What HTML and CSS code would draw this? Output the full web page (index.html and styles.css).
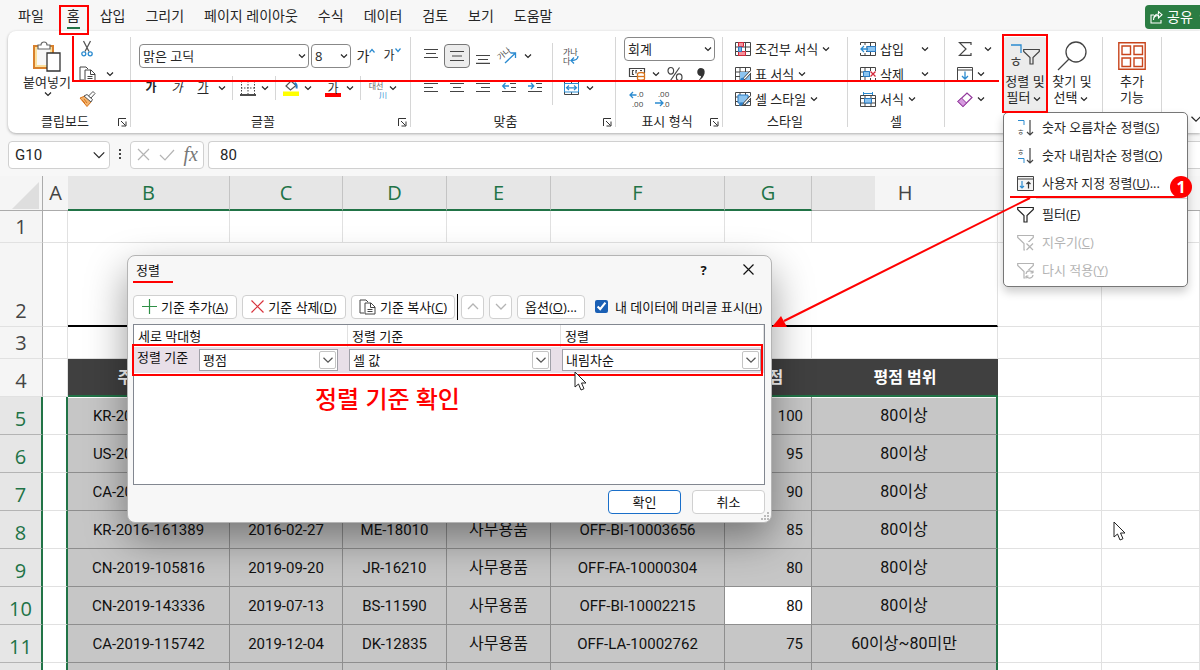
FILE: index.html
```html
<!DOCTYPE html>
<html lang="ko">
<head>
  <meta charset="UTF-8">
  <meta name="viewport" content="width=device-width, initial-scale=1.0">
  <title>사용자 지정 정렬</title>
  <link rel="stylesheet" href="styles.css">
</head>
<body>
  <!-- 공통 아이콘 -->
  <svg class="defs" width="0" height="0" aria-hidden="true">
    <symbol id="chev" viewBox="0 0 8 8"><path d="M1 2.500 4 5.500 7 2.500" fill="none" stroke="currentColor" stroke-width="1.200" vector-effect="non-scaling-stroke"/></symbol>
    <symbol id="launch" viewBox="0 0 9 9"><path d="M.5 8V.5H8M3 3l4.500 4.500M8 3.500V8H3.500" fill="none" stroke="#333"/></symbol>
    <symbol id="copy" viewBox="0 0 17 16"><path d="M5 14H1V1h6l2 2M6 15V4h6l4 4v7zM11.500 4v4.500H16M8.500 10.500h5M8.500 12.500h5" fill="none" stroke="#444"/></symbol>
    <symbol id="funnel" viewBox="0 0 17 17"><path d="M.7 1.500h15.600v2L10 9.500V16H7V9.500L.7 3.500z" fill="none" stroke="currentColor" stroke-width="1.200"/></symbol>
    <symbol id="table" viewBox="0 0 16 14"><path d="M.5.5h15v13H.5zM.5 5h15M.5 9.500h15M5 .5v13M10.500 .5v13" fill="none" stroke="#444"/></symbol>
    <symbol id="cursor" viewBox="0 0 13 20"><path d="M1 1v15l3.500-3 2.500 6 3-1.300-2.500-5.700H12z" fill="#fff" stroke="#222"/></symbol>
  </svg>

  <header class="tabs">
    <nav class="tab-list">
      <a href="#">파일</a>
      <a href="#" class="active">홈</a>
      <a href="#">삽입</a>
      <a href="#">그리기</a>
      <a href="#">페이지 레이아웃</a>
      <a href="#">수식</a>
      <a href="#">데이터</a>
      <a href="#">검토</a>
      <a href="#">보기</a>
      <a href="#">도움말</a>
    </nav>
    <button class="share">
      <svg width="13" height="13" viewBox="0 0 13 13"><path d="M4 4H1v8h10V9M3.500 9c0-3 2-4.500 5-4.500V7L12 3.700 8.500.7V3C5 3 3.500 5.500 3.500 9z" fill="none" stroke="#fff" stroke-width="1.100"/></svg>
      공유
      <svg class="chev"><use href="#chev"/></svg>
    </button>
  </header>

  <section class="ribbon">
    <!-- 클립보드 -->
    <div class="group group-clip">
      <div class="group-body">
        <button class="big">
          <svg width="28" height="31" viewBox="0 0 28 31"><path d="M1 5h19v22H1z" fill="#fbdf9c" stroke="#d8802c" stroke-width="2"/><path d="M4 8h13v16H4z" fill="#f7f7f7"/><path d="M5 8V4h3c0-4 6-4 6 0h3v4z" fill="#fff" stroke="#666" stroke-width="1.200"/><path d="M14 12h13v18H14z" fill="#fff" stroke="#333" stroke-width="1.300"/></svg>
          <span>붙여넣기</span>
          <svg class="chev"><use href="#chev"/></svg>
        </button>
        <div class="stack">
          <div class="row"><button class="tool" aria-label="잘라내기"><svg width="12" height="16" viewBox="0 0 12 16"><path d="M2.500 0 8 10.500M9.500 0 4 10.500" stroke="#555" stroke-width="1.300"/><circle cx="2.800" cy="12.800" r="2" fill="none" stroke="#2b8bd0" stroke-width="1.300"/><circle cx="9.200" cy="12.800" r="2" fill="none" stroke="#2b8bd0" stroke-width="1.300"/></svg></button></div>
          <div class="row copy-row"><button class="tool" aria-label="복사"><svg width="17" height="16"><use href="#copy"/></svg></button><svg class="chev"><use href="#chev"/></svg></div>
          <div class="row"><button class="tool" aria-label="서식 복사"><svg width="17" height="16" viewBox="0 0 17 16"><path d="m1 7 5-2 6 6-4 4.500z" fill="#f3b26b" stroke="#d8741c"/><path d="m5 5 3-1.500 5.500 5L12 11z" fill="#fff" stroke="#555"/><path d="m9.500 5 4.500-4.500 2 2L12 7z" fill="#fff" stroke="#555"/><path d="m3 9 3 3M5 8l3 4" stroke="#d8741c"/></svg></button></div>
        </div>
      </div>
      <div class="group-label">클립보드<svg class="launch"><use href="#launch"/></svg></div>
    </div>

    <!-- 글꼴 -->
    <div class="group group-font">
      <div class="lines">
        <div class="row">
          <span class="select font-name"><select aria-label="글꼴"><option>맑은 고딕</option></select><svg class="chev"><use href="#chev"/></svg></span>
          <span class="select font-size"><select aria-label="글꼴 크기"><option>8</option></select><svg class="chev"><use href="#chev"/></svg></span>
          <button class="tool glyph large" aria-label="글꼴 크게">가<svg width="6" height="4" viewBox="0 0 6 4"><path d="m.5 3.500 2.500-3 2.500 3" fill="none" stroke="#2b8bd0" stroke-width="1.200"/></svg></button>
          <button class="tool glyph" aria-label="글꼴 작게">가<svg width="6" height="4" viewBox="0 0 6 4"><path d="m.5.5 2.500 3 2.500-3" fill="none" stroke="#2b8bd0" stroke-width="1.200"/></svg></button>
        </div>
        <div class="row">
          <button class="tool glyph"><b>가</b></button>
          <button class="tool glyph"><i>가</i></button>
          <button class="tool glyph"><u>가</u></button>
          <svg class="chev"><use href="#chev"/></svg>
          <span class="sep"></span>
          <button class="tool narrow" aria-label="테두리"><svg width="16" height="16" viewBox="0 0 16 16"><path d="M1 1.500h14M1 8h14M1.500 1v13M8 1v13M14.500 1v13" stroke="#444" stroke-dasharray="1.500 1.500"/><path d="M0 15h16" stroke="#111" stroke-width="1.500"/></svg></button>
          <svg class="chev"><use href="#chev"/></svg>
          <span class="sep"></span>
          <button class="tool narrow" aria-label="채우기 색"><svg width="16" height="16" viewBox="0 0 16 16"><path d="m8 1 5 4.500-5.500 4.500-4.500-4z" fill="#fff" stroke="#555" stroke-width="1.200"/><path d="M11.500 3c2 1 2.500 3 2 5.500" fill="none" stroke="#2b7cc4" stroke-width="2"/><path d="M0 11.500h16V16H0z" fill="#ff0"/></svg></button>
          <svg class="chev gap-after"><use href="#chev"/></svg>
          <button class="tool narrow glyph font-color">가</button>
          <svg class="chev"><use href="#chev"/></svg>
          <span class="sep"></span>
          <button class="tool narrow ruby">대선<span>川</span></button>
          <svg class="chev"><use href="#chev"/></svg>
        </div>
      </div>
      <div class="group-label">글꼴<svg class="launch"><use href="#launch"/></svg></div>
    </div>

    <!-- 맞춤 -->
    <div class="group group-align">
      <div class="group-body">
        <div class="lines">
          <div class="row">
            <button class="tool" aria-label="위쪽 맞춤"><svg width="14" height="16" viewBox="0 0 14 16"><path d="M0 1.500h14M2 5.500h10M0 9.500h14" stroke="#444" stroke-width="1.200"/></svg></button>
            <button class="tool pressed" aria-label="가운데 맞춤"><svg width="14" height="16" viewBox="0 0 14 16"><path d="M0 3.500h14M2 8h10M0 12.500h14" stroke="#444" stroke-width="1.200"/></svg></button>
            <button class="tool" aria-label="아래쪽 맞춤"><svg width="14" height="16" viewBox="0 0 14 16"><path d="M0 7.500h14M2 11.500h10M0 15.300h14" stroke="#444" stroke-width="1.200"/></svg></button>
            <button class="tool" aria-label="방향"><svg width="16" height="16" viewBox="0 0 16 16"><text class="icon-text" x="-3" y="9" transform="rotate(-38 3 8)">가나</text><path d="M4 15 14.500 5M9.500 5h5v5" fill="none" stroke="#2b8bd0" stroke-width="1.300"/></svg></button>
            <svg class="chev"><use href="#chev"/></svg>
          </div>
          <div class="row">
            <button class="tool" aria-label="왼쪽 맞춤"><svg width="14" height="12" viewBox="0 0 14 12"><path d="M0 1.500h14M0 5.500h9M0 9.500h14" stroke="#444" stroke-width="1.200"/></svg></button>
            <button class="tool" aria-label="가로 가운데"><svg width="14" height="12" viewBox="0 0 14 12"><path d="M0 1.500h14M3 5.500h8M0 9.500h14" stroke="#444" stroke-width="1.200"/></svg></button>
            <button class="tool" aria-label="오른쪽 맞춤"><svg width="14" height="12" viewBox="0 0 14 12"><path d="M0 1.500h14M5 5.500h9M0 9.500h14" stroke="#444" stroke-width="1.200"/></svg></button>
            <button class="tool" aria-label="내어쓰기"><svg width="14" height="12" viewBox="0 0 14 12"><path d="M8 1.500h6M9 5.500h5M0 9.500h14" stroke="#444" stroke-width="1.200"/><path d="M7 4H1M3.500 1 .7 4l2.800 3" fill="none" stroke="#2b8bd0" stroke-width="1.300"/></svg></button>
            <button class="tool" aria-label="들여쓰기"><svg width="14" height="12" viewBox="0 0 14 12"><path d="M8 1.500h6M9 5.500h5M0 9.500h14" stroke="#444" stroke-width="1.200"/><path d="M0 4h6M3 1l2.800 3L3 7" fill="none" stroke="#2b8bd0" stroke-width="1.300"/></svg></button>
          </div>
        </div>
        <span class="sep tall"></span>
        <div class="lines">
          <div class="row"><button class="tool" aria-label="자동 줄 바꿈"><svg width="16" height="18" viewBox="0 0 16 18"><text class="icon-text" x="0" y="8">가나</text><text class="icon-text" x="0" y="17">다</text><path d="M15 9c0 3-2 4.500-6.500 4.500M11 10.500l-3 3 3 3" fill="none" stroke="#2b8bd0" stroke-width="1.300"/></svg></button></div>
          <div class="row"><button class="tool" aria-label="병합"><svg width="15" height="14" viewBox="0 0 15 14"><path d="M.5.5h14v13H.5zM7.500 0v3M7.500 11v3" fill="none" stroke="#444"/><path d="M.5 2.500h14v8.500H.5z" fill="#fff" stroke="#2b8bd0"/><path d="M3 6.800h9M5 4.500 2.500 6.800 5 9M10 4.500l2.500 2.300L10 9" fill="none" stroke="#2b8bd0" stroke-width="1.200"/></svg></button><svg class="chev"><use href="#chev"/></svg></div>
        </div>
      </div>
      <div class="group-label">맞춤<svg class="launch"><use href="#launch"/></svg></div>
    </div>

    <!-- 표시 형식 -->
    <div class="group group-number">
      <div class="stack">
        <div class="row"><span class="select number-format"><select aria-label="표시 형식"><option>회계</option></select><svg class="chev"><use href="#chev"/></svg></span></div>
        <div class="row">
          <button class="tool" aria-label="회계 형식"><svg width="16" height="14" viewBox="0 0 16 14"><path d="M8 9.500H.5v-8h15V6M5 3.500H3.500v4H5M8 3.500h-1v3M11 3.500h2" fill="none" stroke="#444" stroke-width="1.200"/><path d="M8.500 7c0-2 7-2 7 0v5c0 1.500-7 1.500-7 0z" fill="#fff" stroke="#d8741c" stroke-width="1.300"/><path d="M8.500 9.500h7" stroke="#d8741c" stroke-width="1.300"/></svg></button>
          <svg class="chev"><use href="#chev"/></svg>
          <button class="tool" aria-label="백분율"><svg width="16" height="14" viewBox="0 0 16 14"><path d="M12.500.5 3.500 13.500" stroke="#444" stroke-width="1.200"/><ellipse cx="3.800" cy="3.800" rx="2.800" ry="3.300" fill="none" stroke="#444" stroke-width="1.200"/><ellipse cx="12.200" cy="10.200" rx="2.800" ry="3.300" fill="none" stroke="#444" stroke-width="1.200"/></svg></button>
          <button class="tool" aria-label="쉼표"><svg width="8" height="13" viewBox="0 0 8 13"><path d="M4 0c6 0 4.500 10-3 13 2-2 3-3.500 3-5C-1 8-1 0 4 0z" fill="#333"/></svg></button>
        </div>
        <div class="row">
          <button class="tool" aria-label="자릿수 늘림"><svg width="17" height="18" viewBox="0 0 17 18"><text class="icon-num" x="8" y="7">.0</text><text class="icon-num" x="3" y="17">.00</text><path d="M7.500 5H1M4 2 1 5l3 3" fill="none" stroke="#2b8bd0" stroke-width="1.300"/></svg></button>
          <button class="tool" aria-label="자릿수 줄임"><svg width="17" height="18" viewBox="0 0 17 18"><text class="icon-num" x="3" y="7">.00</text><text class="icon-num" x="8" y="17">.0</text><path d="M0 13h7.500M5 10l3 3-3 3" fill="none" stroke="#2b8bd0" stroke-width="1.300"/></svg></button>
        </div>
      </div>
      <div class="group-label">표시 형식<svg class="launch"><use href="#launch"/></svg></div>
    </div>

    <!-- 스타일 -->
    <div class="group group-style">
      <div class="stack">
        <button class="item"><svg width="16" height="14" viewBox="0 0 16 14"><use href="#table"/><path d="M3.500.5h5v4h-5zM3.500 9.500h7v4h-7z" fill="#f5909a" stroke="#d3273a"/><path d="M3.500 5h3v4.500h-3z" fill="#7db9e8" stroke="#2b7cc4"/></svg>조건부 서식<svg class="chev"><use href="#chev"/></svg></button>
        <button class="item"><svg width="16" height="14" viewBox="0 0 16 14"><use href="#table"/><path d="M5 5h10v8H5z" fill="#8cc4f0"/><path d="M15.500 3.500 9 10.500l-2 3 3.500-1.500L16 6" fill="#fff" stroke="#444"/><path d="M5 14c0-3 2-4 4-3 0 2-1 3-4 3z" fill="#2b7cc4"/></svg>표 서식<svg class="chev"><use href="#chev"/></svg></button>
        <button class="item"><svg width="16" height="14" viewBox="0 0 16 14"><use href="#table"/><path d="M3 3h10v8H3z" fill="#8cc4f0" stroke="#2b7cc4"/><path d="M15.500 3.500 9 10.500l-2 3 3.500-1.500L16 6" fill="#fff" stroke="#444"/><path d="M4 14c0-3 2-4 4-3 0 2-1 3-4 3z" fill="#2b7cc4"/></svg>셀 스타일<svg class="chev"><use href="#chev"/></svg></button>
      </div>
      <div class="group-label">스타일</div>
    </div>

    <!-- 셀 -->
    <div class="group group-cell">
      <div class="stack">
        <button class="item split"><svg width="16" height="14" viewBox="0 0 16 14"><use href="#table"/><path d="M7 4.500h8.500v5H7z" fill="#8cc4f0" stroke="#2b7cc4"/><path d="M0 3h6v8H0z" fill="#fff"/><path d="M8 7H1M4 4 1 7l3 3" fill="none" stroke="#2b8bd0" stroke-width="1.300"/></svg>삽입<svg class="chev"><use href="#chev"/></svg></button>
        <button class="item split"><svg width="16" height="14" viewBox="0 0 16 14"><use href="#table"/><path d="M3.500 4.500h6v5h-6z" fill="#8cc4f0" stroke="#2b7cc4"/><path d="M10 4h6v7h-6z" fill="#fff"/><path d="m10.500 4.500 5 5M15.500 4.500l-5 5" stroke="#d3273a" stroke-width="1.300"/></svg>삭제<svg class="chev"><use href="#chev"/></svg></button>
        <button class="item"><svg width="16" height="15" viewBox="0 0 16 15"><path d="M.5 3.500h15v11H.5zM.5 11h15M5 3v12M11 3v12M.5 6.500h15" fill="none" stroke="#444"/><path d="M4.500 6.500h7v4.500h-7z" fill="#8cc4f0" stroke="#2b7cc4"/><path d="M3 1.500h10M3.500 0v3M12.500 0v3" stroke="#2b8bd0"/></svg>서식<svg class="chev"><use href="#chev"/></svg></button>
      </div>
      <div class="group-label">셀</div>
    </div>

    <!-- 편집 -->
    <div class="group group-edit">
      <div class="group-body">
        <div class="stack">
          <button class="item split-small" aria-label="합계"><svg width="16" height="14" viewBox="0 0 16 14"><path d="M14 3V.7H2.500L9 7l-6.500 6.300H14V11" fill="none" stroke="#444" stroke-width="1.200"/></svg><svg class="chev"><use href="#chev"/></svg></button>
          <button class="item" aria-label="채우기"><svg width="16" height="14" viewBox="0 0 16 14"><path d="M.5.5h15v13H.5zM.5 3h15" fill="none" stroke="#444"/><path d="M8 4.500V12M5 9l3 3 3-3" fill="none" stroke="#2b8bd0" stroke-width="1.300"/></svg><svg class="chev"><use href="#chev"/></svg></button>
          <button class="item" aria-label="지우기"><svg width="16" height="15" viewBox="0 0 16 15"><path d="M1 9.500 10 1l5 4.500-9 9z" fill="#fff" stroke="#93399c" stroke-width="1.200"/><path d="m1 9.500 3.500-3.500 5 5L6 14.500z" fill="#d79be0" stroke="#93399c"/></svg><svg class="chev"><use href="#chev"/></svg></button>
        </div>
        <div class="sort-wrap">
          <button class="big open">
            <svg width="30" height="30" viewBox="0 0 30 30"><path d="M1 4h10v8" fill="none" stroke="#2b8bd0" stroke-width="1.300"/><text class="icon-jamo" x="-1" y="26">ㅎ</text><use href="#funnel" x="13" y="7" width="17" height="17" color="#444"/></svg>
            <span>정렬 및<br>필터<svg class="chev"><use href="#chev"/></svg></span>
          </button>
          <!-- 정렬 및 필터 메뉴 -->
          <div class="menu">
            <button><svg width="17" height="17" viewBox="0 0 17 17"><path d="M1 1.500h6V6" fill="none" stroke="#2b8bd0"/><text class="icon-text" x="0" y="16">ㅎ</text><path d="M13 1v15M10 13l3 3 3-3" fill="none" stroke="#444" stroke-width="1.200"/></svg>숫자 오름차순 정렬(<u>S</u>)</button>
            <button><svg width="17" height="17" viewBox="0 0 17 17"><path d="M1 11.500h6V16" fill="none" stroke="#2b8bd0"/><text class="icon-text" x="0" y="8">ㅎ</text><path d="M13 1v15M10 13l3 3 3-3" fill="none" stroke="#444" stroke-width="1.200"/></svg>숫자 내림차순 정렬(<u>O</u>)</button>
            <button><svg width="17" height="17" viewBox="0 0 17 17"><path d="M.5 1.500h16v14H.5zM.5 4h16" fill="#f4f4f4" stroke="#444"/><path d="M5 6v7M3 11l2 2 2-2" fill="none" stroke="#2b8bd0" stroke-width="1.200"/><path d="M11.500 13.500V7M9.500 9l2-2 2 2" fill="none" stroke="#333" stroke-width="1.200"/></svg>사용자 지정 정렬(<u>U</u>)...</button>
            <hr>
            <button><svg width="17" height="17"><use href="#funnel"/></svg>필터(<u>F</u>)</button>
            <button disabled><svg width="17" height="17" viewBox="0 0 17 17"><use href="#funnel"/><path d="M8 8h9v9H8z" fill="#fff"/><path d="m9.500 9.500 6.500 6.500M16 9.500 9.500 16" stroke="currentColor" stroke-width="1.200"/></svg>지우기(<u>C</u>)</button>
            <button disabled><svg width="17" height="17" viewBox="0 0 17 17"><use href="#funnel"/><path d="M8 8h9v9H8z" fill="#fff"/><path d="M9 12c.5-4 5.500-4 7-1V8.500M16 11h-2.500M16 13c-.5 4-5.500 4-7 1v2.500M9 14h2.500" fill="none" stroke="currentColor" stroke-width="1.200"/></svg>다시 적용(<u>Y</u>)</button>
          </div>
        </div>
        <button class="big">
          <svg width="30" height="30" viewBox="0 0 30 30"><circle cx="19" cy="11" r="10" fill="none" stroke="#444" stroke-width="1.300"/><path d="M12 18 1 29" stroke="#444" stroke-width="1.300"/></svg>
          <span>찾기 및<br>선택<svg class="chev"><use href="#chev"/></svg></span>
        </button>
      </div>
    </div>

    <!-- 추가 기능 -->
    <div class="group group-addin">
      <button class="big">
        <svg width="28" height="30" viewBox="0 0 28 30"><path d="M.8 1.800h26.400v26.400H.8z" fill="none" stroke="#c8451c" stroke-width="1.400"/><path d="M4 5h8.500v8.500H4zM16 5h8.500v8.500H16zM4 17h8.500v8.500H4zM16 17h8.500v8.500H16z" fill="none" stroke="#c8451c" stroke-width="1.400"/></svg>
        <span>추가<br>기능</span>
      </button>
    </div>
    <svg class="chev ribbon-toggle"><use href="#chev"/></svg>
  </section>

  <!-- 수식 입력줄 -->
  <section class="formula-bar">
    <div class="name-box"><input type="text" value="G10" aria-label="이름 상자"><svg width="14" height="14"><use href="#chev"/></svg></div>
    <svg width="3" height="11" viewBox="0 0 3 11"><path d="M0 0h2v2H0zM0 4h2v2H0zM0 8h2v2H0z" fill="#444"/></svg>
    <div class="fx-box">
      <svg width="13" height="13" viewBox="0 0 13 13"><path d="m1 1 11 11M12 1 1 12" stroke="#b4b4b4" stroke-width="1.200"/></svg>
      <svg width="16" height="12" viewBox="0 0 16 12"><path d="m1 6 5 5L15 1" fill="none" stroke="#b4b4b4" stroke-width="1.200"/></svg>
      <span class="fx">fx</span>
    </div>
    <input class="formula" type="text" value="80" aria-label="수식">
  </section>

  <main class="sheet">
    <table>
      <colgroup>
        <col class="c-head"><col class="c-a"><col class="c-b"><col class="c-c"><col class="c-d"><col class="c-e"><col class="c-f"><col class="c-g"><col class="c-h"><col class="c-i"><col>
      </colgroup>
      <thead>
        <tr>
          <th class="corner"><svg width="27" height="27" viewBox="0 0 27 27"><path d="M27 0v27H0z" fill="#dedede"/></svg></th>
          <th>A</th><th class="on">B</th><th class="on">C</th><th class="on">D</th><th class="on">E</th><th class="on">F</th><th class="on">G</th><th class="half">H</th><th></th><th></th>
        </tr>
      </thead>
      <tbody>
        <tr class="short"><th>1</th><td></td><td></td><td></td><td></td><td></td><td></td><td></td><td></td><td></td><td></td></tr>
        <tr class="title-row"><th>2</th><td></td><td colspan="7" class="title-cell"></td><td></td><td></td></tr>
        <tr class="short"><th>3</th><td></td><td></td><td></td><td></td><td></td><td></td><td></td><td></td><td></td><td></td></tr>
        <tr class="head"><th>4</th><td></td><td>주문 번호</td><td>주문 날짜</td><td>고객 번호</td><td>분류</td><td>제품 번호</td><td>평점</td><td>평점 범위</td><td></td><td></td></tr>
        <tr class="data first"><th>5</th><td></td><td>KR-2016-161389</td><td></td><td></td><td></td><td></td><td>100</td><td>80이상</td><td></td><td></td></tr>
        <tr class="data"><th>6</th><td></td><td>US-2016-143336</td><td></td><td></td><td></td><td></td><td>95</td><td>80이상</td><td></td><td></td></tr>
        <tr class="data"><th>7</th><td></td><td>CA-2019-115742</td><td></td><td></td><td></td><td></td><td>90</td><td>80이상</td><td></td><td></td></tr>
        <tr class="data"><th>8</th><td></td><td>KR-2016-161389</td><td>2016-02-27</td><td>ME-18010</td><td>사무용품</td><td>OFF-BI-10003656</td><td>85</td><td>80이상</td><td></td><td></td></tr>
        <tr class="data"><th>9</th><td></td><td>CN-2019-105816</td><td>2019-09-20</td><td>JR-16210</td><td>사무용품</td><td>OFF-FA-10000304</td><td>80</td><td>80이상</td><td></td><td></td></tr>
        <tr class="data"><th>10</th><td></td><td>CN-2019-143336</td><td>2019-07-13</td><td>BS-11590</td><td>사무용품</td><td>OFF-BI-10002215</td><td class="current">80</td><td>80이상</td><td></td><td></td></tr>
        <tr class="data"><th>11</th><td></td><td>CA-2019-115742</td><td>2019-12-04</td><td>DK-12835</td><td>사무용품</td><td>OFF-LA-10002762</td><td>75</td><td>60이상~80미만</td><td></td><td></td></tr>
        <tr class="data"><th></th><td></td><td></td><td></td><td></td><td></td><td></td><td></td><td></td><td></td><td></td></tr>
      </tbody>
    </table>
  </main>

  <!-- 정렬 대화 상자 -->
  <div class="dialog" role="dialog" aria-labelledby="dialogTitle">
    <div class="dialog-title">
      <span id="dialogTitle">정렬</span>
      <button class="title-btn" aria-label="도움말"><b>?</b></button>
      <button class="title-btn" aria-label="닫기"><svg width="11" height="11" viewBox="0 0 11 11"><path d="m.5.5 10 10M10.500.5l-10 10" stroke="#111" stroke-width="1.200"/></svg></button>
    </div>
    <div class="dialog-tools">
      <button class="btn wide"><svg width="15" height="15" viewBox="0 0 15 15"><path d="M7.500 0v15M0 7.500h15" stroke="#2f8f46" stroke-width="1.200"/></svg><span>기준 추가(<u>A</u>)</span></button>
      <button class="btn wide"><svg width="13" height="13" viewBox="0 0 13 13"><path d="m.5.5 12 12M12.500.5l-12 12" stroke="#d8323c" stroke-width="1.200"/></svg><span>기준 삭제(<u>D</u>)</span></button>
      <button class="btn wide copy"><svg width="17" height="16"><use href="#copy"/></svg><span>기준 복사(<u>C</u>)</span></button>
      <span class="bar"></span>
      <button class="btn square" aria-label="위로"><svg width="12" height="8" viewBox="0 0 12 8"><path d="m1 6 5-5 5 5" fill="none" stroke="#b4b4b4" stroke-width="1.300"/></svg></button>
      <button class="btn square" aria-label="아래로"><svg width="12" height="8" viewBox="0 0 12 8"><path d="m1 1 5 5 5-5" fill="none" stroke="#b4b4b4" stroke-width="1.300"/></svg></button>
      <button class="btn option">옵션(<u>O</u>)...</button>
      <label class="check"><input type="checkbox" checked><span>내 데이터에 머리글 표시(<u>H</u>)</span></label>
    </div>
    <div class="criteria">
      <div class="criteria-row criteria-head"><span>세로 막대형</span><span>정렬 기준</span><span>정렬</span></div>
      <div class="criteria-row criteria-line">
        <div class="cell"><label for="sortColumn">정렬 기준</label><span class="combo"><select id="sortColumn"><option>평점</option></select><i><svg width="12" height="12"><use href="#chev"/></svg></i></span></div>
        <div class="cell"><span class="combo"><select aria-label="정렬 기준 값"><option>셀 값</option></select><i><svg width="12" height="12"><use href="#chev"/></svg></i></span></div>
        <div class="cell"><span class="combo"><select aria-label="정렬 순서"><option>내림차순</option></select><i><svg width="12" height="12"><use href="#chev"/></svg></i></span></div>
      </div>
      <p class="note">정렬 기준 확인</p>
    </div>
    <div class="dialog-actions">
      <button class="btn action primary">확인</button>
      <button class="btn action">취소</button>
    </div>
    <svg class="grip" width="10" height="10" viewBox="0 0 10 10"><path d="M6 0h2v2H6zM3 3h2v2H3zM6 3h2v2H6zM0 6h2v2H0zM3 6h2v2H3zM6 6h2v2H6z" fill="#bbb"/></svg>
  </div>

  <!-- 빨간색 설명 표시 -->
  <svg class="marks" width="1200" height="670" viewBox="0 0 1200 670" aria-hidden="true">
    <g fill="none" stroke="#f00" stroke-width="2">
      <path d="M60 6h28v28H60zM73 36v45h926M1003 35h44v77h-44zM133 345h629v30H133z"/>
      <path d="M133 282h40M1010 197h170M1030 198 784 321"/>
    </g>
    <path d="m772 327 9-11 6 11z" fill="#f00"/>
    <use href="#cursor" x="574" y="371" width="13" height="20"/>
    <use href="#cursor" x="1113" y="521" width="13" height="20"/>
  </svg>
  <span class="badge">1</span>
</body>
</html>
```
FILE: styles.css
```css
* {
  box-sizing: border-box;
}
body {
  margin: 0;
  height: 100vh;
  display: flex;
  flex-direction: column;
  overflow: hidden;
  position: relative;
  background: #f7f7f7;
  color: #262626;
  font-family: "Open Sans", "Noto Sans CJK KR", sans-serif;
  font-size: 13px;
  line-height: 16px;
}
button, input, select {
  font: inherit;
  color: inherit;
  padding: 0;
  margin: 0;
}
button {
  border: 0;
  background: none;
  white-space: nowrap;
}
svg {
  flex: none;
  overflow: visible;
}
.defs {
  position: absolute;
}
.chev {
  width: 8px;
  height: 8px;
  margin: 0 2px;
  vertical-align: middle;
}

/* 탭 */
.tabs {
  display: flex;
  justify-content: space-between;
  height: 31px;
  flex: none;
}
.tab-list {
  display: flex;
  gap: 20px;
  padding: 7px 0 0 18px;
  font-size: 14px;
  line-height: 18px;
}
.tab-list a {
  color: #262626;
  text-decoration: none;
}
.tab-list .active {
  height: 22px;
  margin-left: 3px;
  border-bottom: 2px solid #217346;
}
.share {
  display: flex;
  align-items: center;
  gap: 4px;
  width: 66px;
  height: 24px;
  margin: 5px -11px 0 0;
  padding-left: 5px;
  border-radius: 4px;
  background: #2b7d43;
  color: #fff;
  font-size: 14px;
}

/* 리본 */
.ribbon {
  display: flex;
  flex: none;
  height: 102px;
  margin-left: 8px;
  padding: 6px 0;
  position: relative;
  z-index: 2;
  background: #fff;
  border-radius: 8px 0 0 8px;
  box-shadow: 0 1px 3px rgba(0, 0, 0, 0.3);
}
.group {
  display: flex;
  flex-direction: column;
  flex: none;
  border-right: 1px solid #d6d6d6;
}
.group-clip { width: 123px; padding-left: 14px; }
.group-font { width: 280px; padding-left: 7px; }
.group-align { width: 205px; padding-left: 7px; }
.group-number { width: 107px; padding-left: 8px; }
.group-style { width: 125px; padding-left: 12px; }
.group-cell { width: 97px; padding-left: 12px; }
.group-edit { width: 158px; padding-left: 12px; }
.group-addin { width: 59px; padding-left: 7px; }
.group-body {
  display: flex;
}
.group-label {
  position: relative;
  margin-top: auto;
  padding-right: 12px;
  line-height: 12px;
  text-align: center;
}
.group-clip .group-label,
.group-font .group-label,
.group-align .group-label {
  padding-right: 22px;
}
.launch {
  position: absolute;
  right: 3px;
  top: 3px;
  width: 9px;
  height: 9px;
}
.stack {
  display: grid;
  grid-auto-rows: 24px;
  gap: 1px;
}
.lines {
  display: grid;
  grid-auto-rows: 24px;
  gap: 8px;
  padding-top: 7px;
}
.row {
  display: flex;
  align-items: center;
}
.sep {
  width: 1px;
  height: 24px;
  margin: 0 4px;
  background: #d6d6d6;
}
.sep.tall {
  height: 62px;
  margin: 6px 5px 0 4px;
}
.tool {
  display: grid;
  place-items: center;
  width: 26px;
  height: 24px;
}
.tool.narrow {
  width: 22px;
}
.copy-row {
  gap: 4px;
}
.pressed {
  background: #ececec;
  border: 1px solid #777;
  border-radius: 4px;
}
.gap-after {
  margin-right: 10px;
}
.glyph {
  display: block;
  font-size: 12px;
  line-height: 22px;
}
.glyph.large {
  font-size: 14px;
  margin-left: 2px;
}
.glyph svg {
  vertical-align: 8px;
}
.font-color {
  height: 18px;
  line-height: 13px;
  background: linear-gradient(#f00, #f00) center bottom / 16px 4px no-repeat;
}
.tool.ruby {
  display: flex;
  flex-direction: column;
  padding-top: 5px;
  font-size: 8px;
  line-height: 9px;
  color: #666;
}
.ruby span {
  align-self: flex-end;
  color: #2b8bd0;
}
.icon-text {
  font-size: 8px;
  fill: #444;
}
.icon-num {
  font-size: 8px;
  fill: #444;
}
.icon-jamo {
  font-size: 15px;
  fill: #444;
}
.select {
  position: relative;
  display: inline-block;
  height: 24px;
}
.select select {
  appearance: none;
  width: 100%;
  height: 24px;
  padding-left: 3px;
  border: 1px solid #888;
  border-radius: 4px;
  background: #fff;
  line-height: 20px;
}
.select .chev {
  position: absolute;
  right: 1px;
  top: 8px;
}
.font-name { width: 170px; margin: 0 2px 0 1px; }
.font-size { width: 40px; }
.number-format { width: 91px; }
.item {
  display: flex;
  align-items: center;
  gap: 4px;
}
.item .chev {
  margin-left: 0;
}
.item.split .chev {
  margin-left: 13px;
}
.item.split-small .chev {
  margin-left: 7px;
}
.big {
  display: flex;
  flex-direction: column;
  align-items: center;
  width: 44px;
  height: 75px;
  padding-top: 4px;
}
.big > svg + span {
  margin-top: 2px;
}
.big .chev {
  margin-left: 3px;
}
.group-clip .big {
  width: 50px;
}
.group-clip .stack {
  padding-left: 2px;
}
.open {
  background: #ececec;
  border-radius: 4px;
}
.sort-wrap {
  position: relative;
  margin: 0 3px 0 9px;
}
.ribbon-toggle {
  align-self: flex-end;
  width: 12px;
  height: 12px;
  margin: 0 0 2px 28px;
}

/* 드롭다운 메뉴 */
.menu {
  position: absolute;
  top: 100%;
  left: 0;
  width: 185px;
  padding-bottom: 2px;
  background: #fff;
  border: 1px solid #777;
  border-radius: 5px;
  box-shadow: 0 5px 10px rgba(0, 0, 0, 0.2);
}
.menu button {
  display: flex;
  align-items: center;
  width: 100%;
  height: 28px;
  padding-left: 13px;
}
.menu button svg {
  margin-right: 8px;
}
.menu button:disabled {
  color: #b4b4b4;
}
.menu hr {
  height: 1px;
  margin: 1px 0 1px 32px;
  border: 0;
  background: #d6d6d6;
}

/* 수식 입력줄 */
.formula-bar {
  display: flex;
  align-items: center;
  flex: none;
  height: 43px;
  padding-left: 8px;
  font-family: Roboto, sans-serif;
  font-size: 15px;
}
.name-box, .fx-box, .formula {
  height: 28px;
  border: 1px solid #d0d0d0;
  border-radius: 4px;
  background: #fff;
}
.name-box {
  display: flex;
  align-items: center;
  width: 102px;
  margin-right: 9px;
  padding: 0 3px 0 6px;
}
.name-box input {
  flex: 1;
  min-width: 0;
  border: 0;
  background: none;
}
.fx-box {
  display: flex;
  align-items: center;
  justify-content: space-between;
  width: 74px;
  margin: 0 4px 0 8px;
  padding: 0 5px 0 6px;
}
.fx {
  color: #777;
  font: italic 20px "Liberation Serif", serif;
}
.formula {
  flex: 1;
  padding-left: 11px;
  border-right: 0;
  border-radius: 4px 0 0 4px;
}

/* 시트 */
.sheet {
  flex: 1;
  min-height: 0;
  overflow: hidden;
}
table {
  width: 100%;
  table-layout: fixed;
  border-spacing: 0;
}
.c-head { width: 43px; }
.c-a { width: 25px; }
.c-b { width: 162px; }
.c-c { width: 113px; }
.c-d { width: 104px; }
.c-e { width: 104px; }
.c-f { width: 174px; }
.c-g { width: 87px; }
.c-h { width: 186px; }
.c-i { width: 104px; }
th, td {
  padding: 0;
  border-right: 1px solid #e1e1e1;
  border-bottom: 1px solid #e1e1e1;
}
th {
  font-size: 20px;
  font-weight: normal;
  color: #444;
}
thead th {
  height: 35px;
  background: #f5f5f5;
  border-right: 0;
  border-bottom-color: #ababab;
}
thead .corner {
  padding: 5px 3px 0 0;
  text-align: right;
  line-height: 0;
  border-right: 1px solid #ababab;
}
thead .on {
  background: #e6e6e6;
  color: #217346;
  border-right: 1px solid #c4c4c4;
  border-bottom: 2px solid #217346;
}
thead .half {
  background: linear-gradient(to right, #e6e6e6 34%, #f5f5f5 34%);
}
tbody th {
  vertical-align: bottom;
  line-height: 30px;
  background: #f5f5f5;
  border-right-color: #ababab;
}
tbody td {
  background: #fff;
}
.short {
  height: 32px;
}
.title-row {
  height: 84px;
}
.title-cell {
  border-bottom: 2px solid #000;
}
.head, .data {
  height: 38px;
}
.head td:nth-child(n+3):nth-child(-n+9) {
  background: #404040;
  border-right: 0;
  border-bottom: 2px solid #217346;
  color: #fff;
  font-size: 16px;
  font-weight: bold;
  text-align: center;
}
.data th {
  background: #e6e6e6;
  color: #217346;
  border-right: 2px solid #217346;
  border-bottom-color: #b4b4b4;
}
.data td:nth-child(2) {
  border-right: 2px solid #217346;
}
.data td:nth-child(n+3):nth-child(-n+9) {
  background: #c6c6c6;
  border-color: #8e8e8e;
  color: #111;
  font-family: Roboto, "Noto Sans CJK KR", sans-serif;
  font-size: 15px;
  text-align: center;
}
.data.first td:nth-child(n+3):nth-child(-n+9) {
  box-shadow: inset 0 1px #fff;
}
.data td:nth-child(n+3):nth-child(6),
.data td:nth-child(n+3):nth-child(9) {
  font-size: 16px;
}
.data td:nth-child(n+3):nth-child(8) {
  padding-right: 8px;
  text-align: right;
}
.data td:nth-child(n+3):nth-child(9) {
  border-right: 2px solid #217346;
}
.data td.current:nth-child(n+3):nth-child(8) {
  background: #fff;
}

/* 정렬 대화 상자 */
.dialog {
  position: absolute;
  z-index: 3;
  left: 127px;
  top: 255px;
  width: 645px;
  padding: 0 6px 8px 5px;
  background: #f7f7f7;
  border: 1px solid #b4b4b4;
  border-radius: 8px;
  box-shadow: 0 16px 40px rgba(0, 0, 0, 0.4);
  color: #111;
}
.dialog-title {
  display: flex;
  align-items: center;
  height: 28px;
  padding-left: 3px;
}
.dialog-title span {
  margin-right: auto;
}
.title-btn {
  width: 45px;
  height: 28px;
}
.title-btn:last-child {
  margin-right: -6px;
}
.dialog-tools {
  display: flex;
  align-items: center;
  gap: 5px;
  height: 40px;
  padding-top: 5px;
}
.btn {
  display: flex;
  align-items: center;
  justify-content: center;
  height: 24px;
  background: #fff;
  border: 1px solid #d0d0d0;
  border-radius: 4px;
}
.btn.wide {
  gap: 4px;
  width: 104px;
}
.btn.copy {
  margin-right: -3px;
}
.bar {
  width: 1px;
  height: 26px;
  margin-right: -2px;
  background: #000;
}
.btn.square {
  width: 23px;
}
.btn.option {
  width: 68px;
}
.check {
  display: flex;
  align-items: center;
  gap: 7px;
  margin-left: 5px;
  white-space: nowrap;
}
.check input {
  width: 13px;
  height: 13px;
  accent-color: #1a5fb4;
}
.criteria {
  height: 161px;
  background: #fff;
  border: 1px solid #828790;
}
.criteria-row {
  display: grid;
  grid-template-columns: 214px 213px 1fr;
}
.criteria-head {
  height: 22px;
  line-height: 22px;
}
.criteria-head span {
  padding-left: 4px;
  border-right: 1px solid #e1e1e1;
}
.criteria-line {
  height: 26px;
  background: #e8dfe8;
}
.cell {
  display: flex;
  justify-content: space-between;
  padding: 2px 10px 2px 1px;
}
.cell:last-child {
  padding-right: 3px;
}
.cell label {
  padding-left: 2px;
}
.combo {
  position: relative;
  flex: 1;
}
.cell label + .combo {
  flex: none;
  width: 139px;
}
.combo select {
  appearance: none;
  width: 100%;
  height: 22px;
  padding-left: 3px;
  background: #fff;
  border: 1px solid #a0a0a8;
}
.combo i {
  position: absolute;
  right: 2px;
  top: 2px;
  display: grid;
  place-items: center;
  width: 17px;
  height: 18px;
  border: 1px solid #c4c4c4;
  border-radius: 2px;
  color: #555;
  pointer-events: none;
}
.note {
  margin: 10px 0 0 181px;
  color: #f00;
  font-size: 24px;
  font-weight: 500;
  line-height: 32px;
}
.dialog-actions {
  display: flex;
  justify-content: flex-end;
  gap: 11px;
  padding-top: 5px;
}
.btn.action {
  width: 73px;
}
.btn.primary {
  border-color: #1a6fc9;
}
.grip {
  position: absolute;
  right: 0;
  bottom: 0;
}

/* 설명 표시 */
.marks {
  position: absolute;
  z-index: 4;
  left: 0;
  top: 0;
  pointer-events: none;
}
.badge {
  position: absolute;
  z-index: 5;
  left: 1170px;
  top: 176px;
  width: 22px;
  height: 22px;
  border-radius: 50%;
  background: #f00;
  color: #fff;
  font-size: 16px;
  font-weight: bold;
  line-height: 22px;
  text-align: center;
}
```
